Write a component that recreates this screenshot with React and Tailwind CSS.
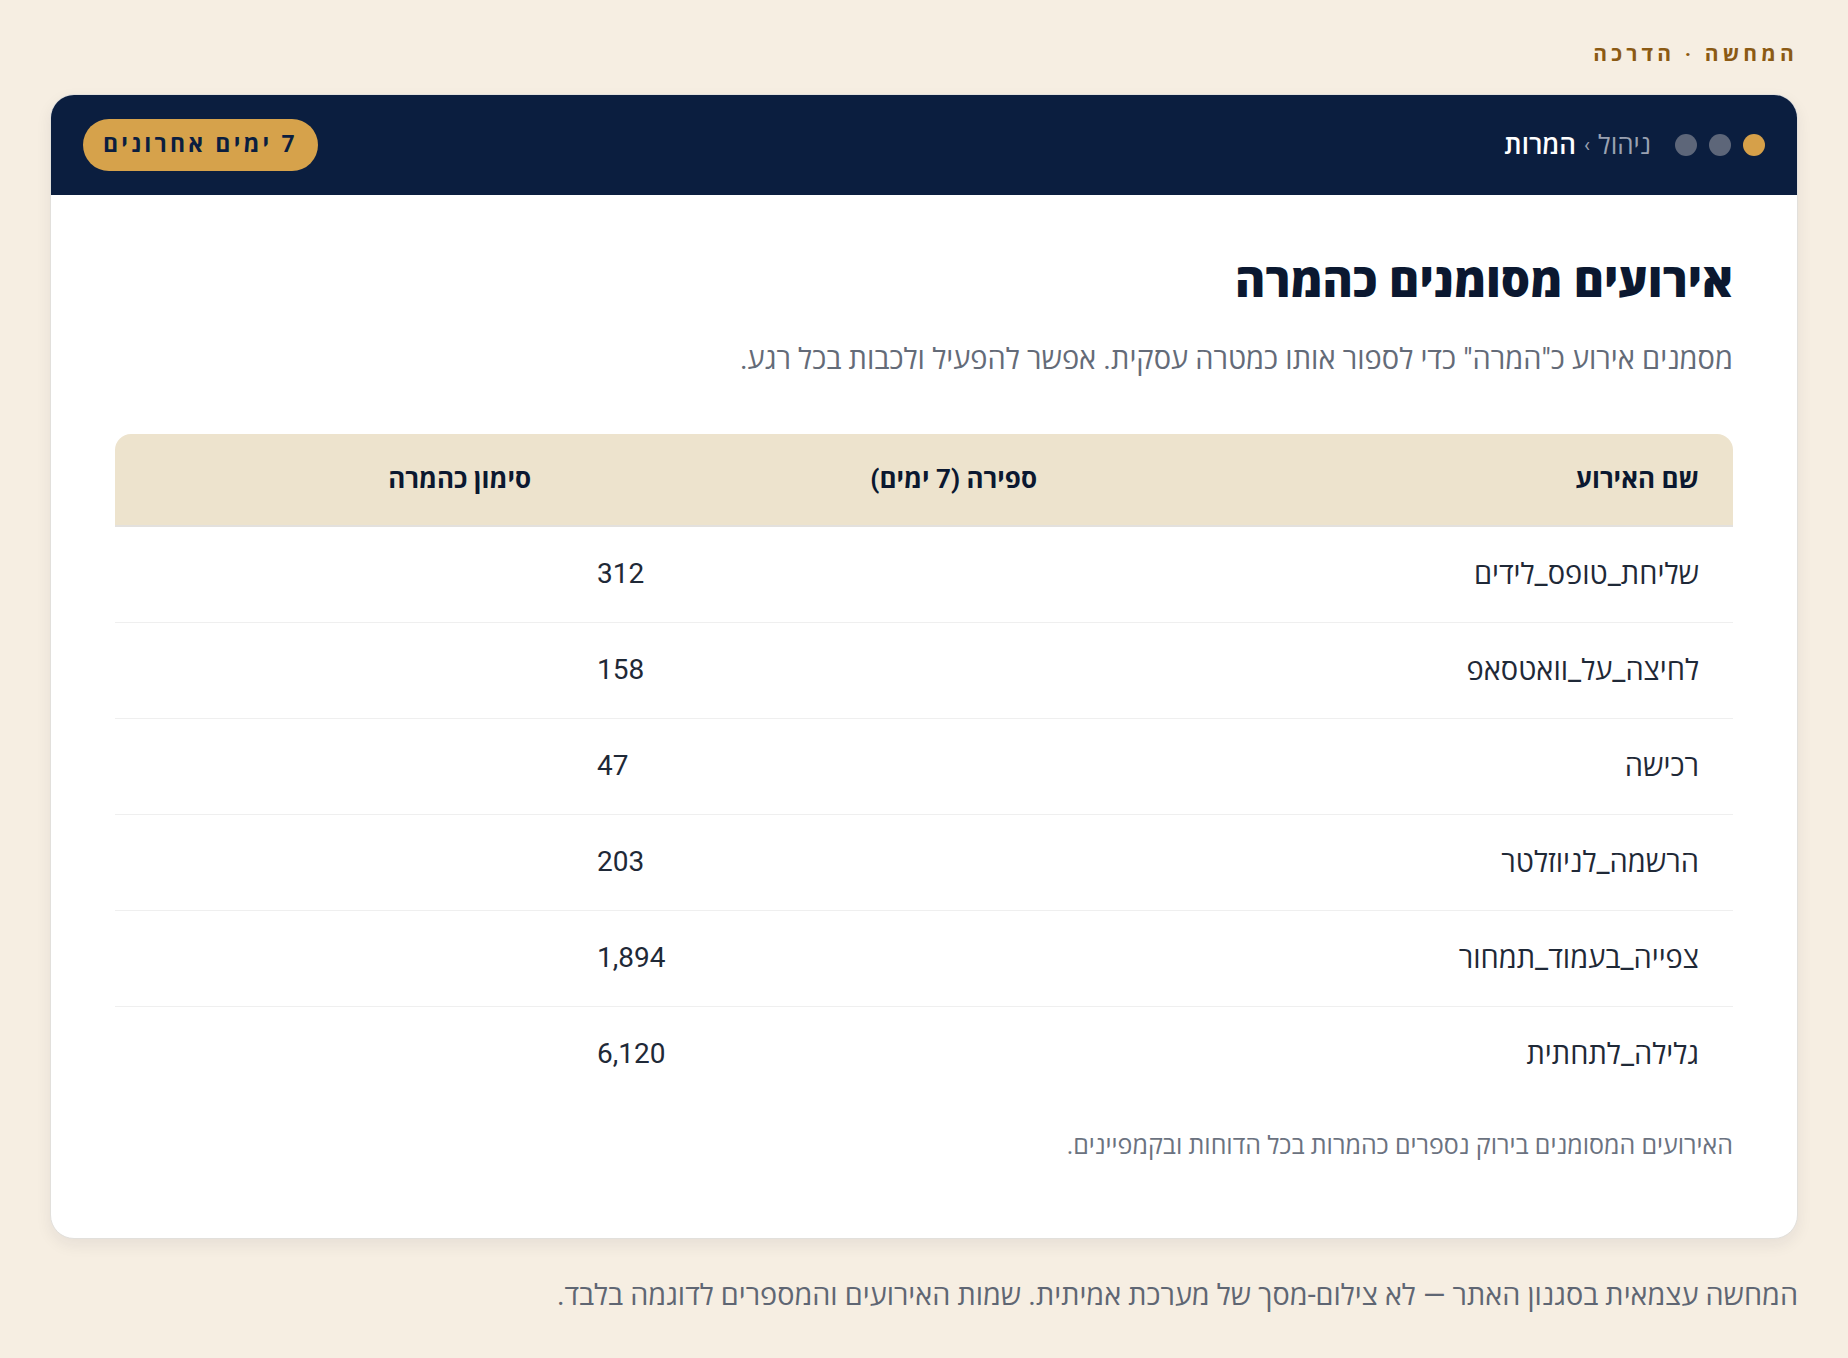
const events = [
  { name: 'שליחת_טופס_לידים', count: '312' },
  { name: 'לחיצה_על_וואטסאפ', count: '158' },
  { name: 'רכישה', count: '47' },
  { name: 'הרשמה_לניוזלטר', count: '203' },
  { name: 'צפייה_בעמוד_תמחור', count: '1,894' },
  { name: 'גלילה_לתחתית', count: '6,120' },
];

function WindowDots() {
  return (
    <div className="flex items-center gap-3">
      <span className="h-[22px] w-[22px] rounded-full bg-[#d6a049]" />
      <span className="h-[22px] w-[22px] rounded-full bg-[#5d6679]" />
      <span className="h-[22px] w-[22px] rounded-full bg-[#5d6679]" />
    </div>
  );
}

export default function App() {
  return (
    <div
      dir="rtl"
      className="min-h-screen bg-[#f6eee2] px-[50px] pt-10 pb-10 font-['Roboto','Open_Sans',sans-serif]"
    >
      <p className="text-[21px] font-bold leading-7 tracking-[0.2em] text-[#8b5a14]">המחשה · הדרכה</p>

      <div className="mt-[26px] overflow-hidden rounded-3xl border border-[#e2e0dc] bg-white shadow-[0_6px_16px_rgba(30,30,60,0.07)]">
        <div className="flex h-[100px] items-center justify-between bg-[#0b1e3f] px-8">
          <div className="flex items-center gap-[24px]">
            <WindowDots />
            <div className="flex items-center gap-2 text-[26px] leading-8">
              <span className="text-[#9aa1b1]">ניהול</span>
              <span className="text-[20px] text-[#9aa1b1]">›</span>
              <span className="font-semibold text-white">המרות</span>
            </div>
          </div>
          <span className="flex h-[52px] items-center rounded-full bg-[#d6a24b] px-5 text-[23px] font-bold tracking-[0.14em] text-[#0b1e3f]">
            7 ימים אחרונים
          </span>
        </div>

        <div className="px-16 pt-[59px] pb-[75px]">
          <h1 className="text-[46px] font-extrabold leading-[54px] text-[#0b1830]">אירועים מסומנים כהמרה</h1>
          <p className="mt-[31px] text-[29px] leading-10 text-[#646b78]">
            מסמנים אירוע כ"המרה" כדי לספור אותו כמטרה עסקית. אפשר להפעיל ולכבות בכל רגע.
          </p>

          <table className="mt-[55px] w-full table-fixed border-collapse">
            <colgroup>
              <col className="w-[662px]" />
              <col className="w-[506px]" />
              <col />
            </colgroup>
            <thead>
              <tr className="h-[92px] bg-[#ede3cd] text-[26px] font-bold text-[#0b1830]">
                <th className="rounded-tr-2xl border-b-2 border-[#e3e1de] px-[34px] text-right">שם האירוע</th>
                <th className="border-b-2 border-[#e3e1de] px-[34px] text-right">ספירה (7 ימים)</th>
                <th className="rounded-tl-2xl border-b-2 border-[#e3e1de] px-[34px] text-right">סימון כהמרה</th>
              </tr>
            </thead>
            <tbody>
              {events.map((event, index) => (
                <tr
                  key={event.name}
                  className={index < events.length - 1 ? 'h-[96px] border-b border-[#efefef]' : 'h-[96px]'}
                >
                  <td className="px-[34px] text-right text-[29px] leading-9 text-[#1f2937]">{event.name}</td>
                  <td dir="ltr" className="px-8 text-left text-[28px] leading-9 text-[#1f2937]">
                    {event.count}
                  </td>
                  <td />
                </tr>
              ))}
            </tbody>
          </table>

          <p className="mt-[27px] text-[25px] leading-[34px] text-[#6b7280]">
            האירועים המסומנים בירוק נספרים כהמרות בכל הדוחות ובקמפיינים.
          </p>
        </div>
      </div>

      <p className="mt-9 text-[28.8px] leading-10 text-[#5f6673]">
        המחשה עצמאית בסגנון האתר — לא צילום-מסך של מערכת אמיתית. שמות האירועים והמספרים לדוגמה בלבד.
      </p>
    </div>
  );
}
